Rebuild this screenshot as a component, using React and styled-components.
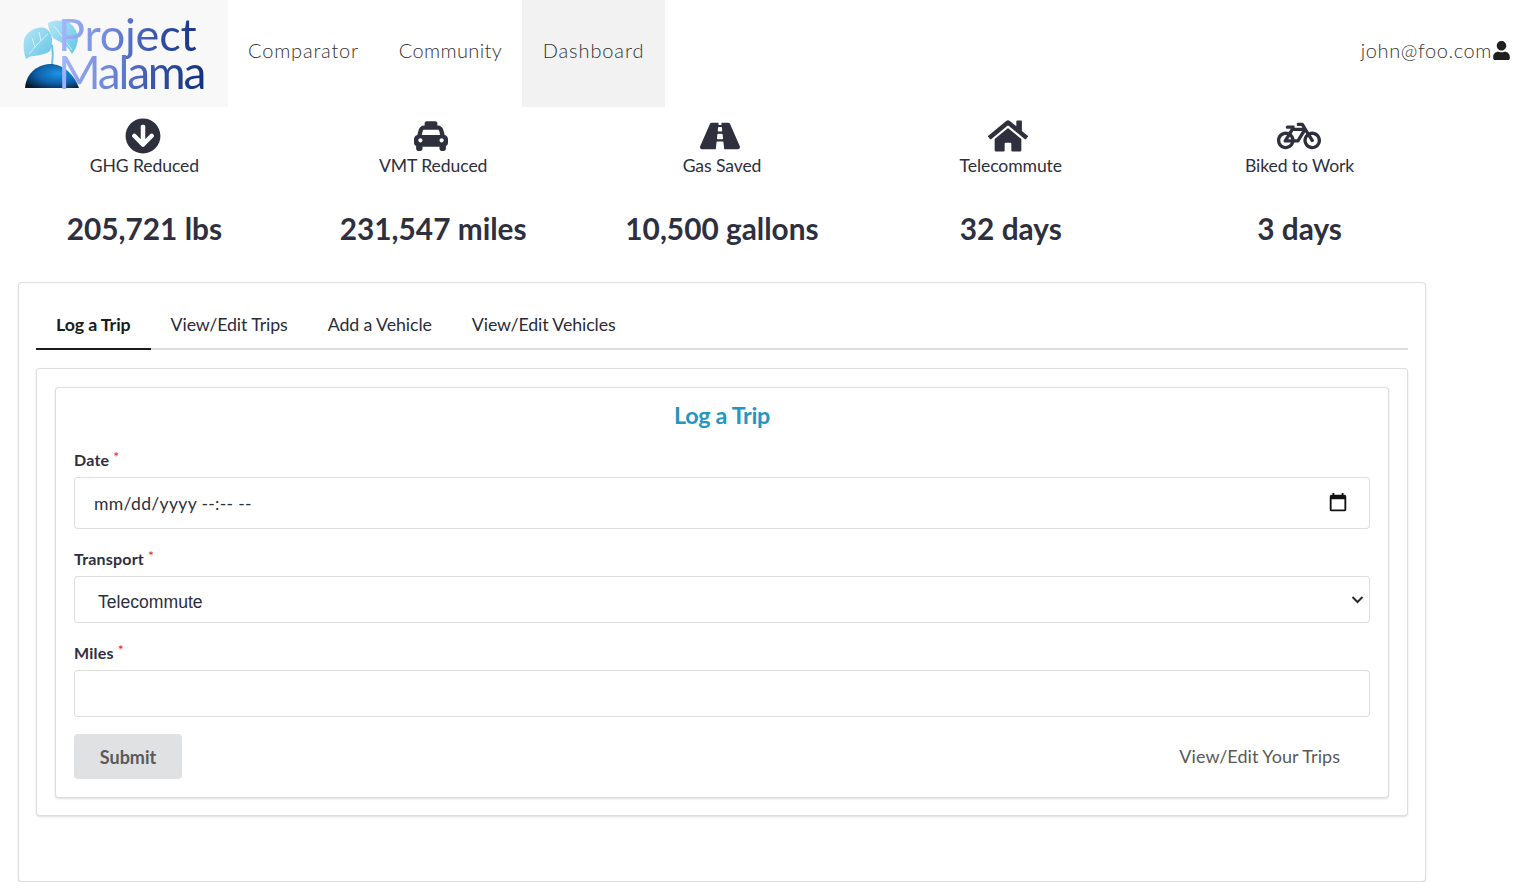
import React from 'react';
import styled, { createGlobalStyle } from 'styled-components';
import { FaArrowCircleDown, FaTaxi, FaRoad, FaHome, FaBicycle, FaUser } from 'react-icons/fa';

const GlobalStyle = createGlobalStyle`
  html, body {
    margin: 0;
    padding: 0;
    background: #fff;
    font-family: Lato, "Helvetica Neue", Arial, sans-serif;
    color: #212121;
  }
  * { box-sizing: border-box; }
`;

// Top nav

const TopNav = styled.nav`
  display: flex;
  align-items: stretch;
  height: 107px;
  background: #fff;
`;

const LogoCell = styled.div`
  position: relative;
  width: 228px;
  background: #f8f8f8;
  padding: 16px 0 0 58px;
`;

const LogoArt = styled.svg`
  position: absolute;
  left: 23px;
  top: 17px;
  width: 58px;
  height: 73px;
`;

const LogoLine = styled.div`
  position: relative;
  font-weight: 400;
  font-size: ${(p) => p.$size}px;
  line-height: 37px;
  letter-spacing: ${(p) => p.$spacing}px;
  white-space: nowrap;
  width: 150px;
  padding-bottom: 10px;
  margin-bottom: -10px;
  background: linear-gradient(100deg, #a9bcff 0%, #6d86da 35%, #2d4aa0 70%, #0d2a78 100%);
  -webkit-background-clip: text;
  background-clip: text;
  color: transparent;
`;

const NavItem = styled.a`
  display: flex;
  align-items: center;
  justify-content: center;
  width: ${(p) => p.$width}px;
  padding-bottom: 7px;
  font-weight: 300;
  font-size: 20px;
  letter-spacing: ${(p) => p.$spacing}px;
  color: #333;
  background: ${(p) => (p.$active ? '#f2f2f2' : 'transparent')};
`;

const UserBlock = styled.div`
  margin-left: auto;
  display: flex;
  align-items: center;
  padding: 0 15px 7px 0;
  font-weight: 300;
  font-size: 20px;
  letter-spacing: 0.6px;
  color: #333;

  svg {
    width: 19px;
    height: 19px;
    color: #1f1f1f;
  }
`;

// Stats row

const StatsRow = styled.section`
  display: grid;
  grid-template-columns: repeat(5, 288.8px);
  padding-top: 11px;
`;

const Stat = styled.div`
  display: flex;
  flex-direction: column;
  align-items: center;
  height: 164px;
  color: #2e2f3f;
`;

const StatIcon = styled.div`
  display: flex;
  align-items: center;
  justify-content: center;
  height: 36px;
  margin-left: ${(p) => p.$shift || 0}px;
  font-size: ${(p) => p.$size || 34}px;
  color: #2e303e;
`;

const StatLabel = styled.div`
  font-size: 17.6px;
  line-height: 24px;
  letter-spacing: -0.1px;
`;

const StatValue = styled.div`
  font-size: 29.8px;
  line-height: 36px;
  font-weight: 700;
  margin-top: 33px;
`;

// Cards

const OuterCard = styled.div`
  width: 1408px;
  height: 600px;
  margin-left: 18px;
  padding: 17px;
  background: #fff;
  border: 1px solid rgba(34, 36, 38, 0.15);
  border-radius: 4px;
  box-shadow: 0 1px 2px rgba(34, 36, 38, 0.15);
`;

const TabBar = styled.div`
  display: flex;
  height: 50px;
  border-bottom: 2px solid rgba(34, 36, 38, 0.15);
`;

const Tab = styled.a`
  height: 50px;
  padding: 0 20px;
  display: flex;
  align-items: center;
  font-size: 17.8px;
  letter-spacing: -0.1px;
  font-weight: ${(p) => (p.$active ? 700 : 400)};
  color: ${(p) => (p.$active ? '#1b1c1d' : '#2b2d3a')};
  border-bottom: 2px solid ${(p) => (p.$active ? '#1b1c1d' : 'transparent')};
`;

const TabPanel = styled.div`
  margin-top: 18px;
  padding: 18px 18px 17px;
  background: #fff;
  border: 1px solid rgba(34, 36, 38, 0.15);
  border-radius: 4px;
  box-shadow: 0 1px 2px rgba(34, 36, 38, 0.15);
`;

const FormCard = styled.form`
  height: 411px;
  padding: 12px 18px 18px;
  background: #fff;
  border: 1px solid rgba(34, 36, 38, 0.15);
  border-radius: 4px;
  box-shadow: 0 1px 2px rgba(34, 36, 38, 0.15);
`;

const FormTitle = styled.h2`
  margin: 0;
  font-size: 23.3px;
  line-height: 30px;
  font-weight: 700;
  letter-spacing: -0.3px;
  text-align: center;
  color: #2596be;
`;

const Field = styled.div`
  margin-top: 20px;
`;

const Label = styled.label`
  display: block;
  font-size: 16px;
  font-weight: 700;
  line-height: 20px;
  letter-spacing: 0.2px;
  margin-bottom: 6px;
  color: #2e2f3f;

  &::after {
    content: '*';
    margin-left: 4px;
    position: relative;
    top: -4px;
    font-size: 14px;
    font-weight: 400;
    color: #db2828;
  }
`;

const fieldBox = `
  width: 100%;
  background: #fff;
  border: 1px solid rgba(34, 36, 38, 0.15);
  border-radius: 4px;
`;

const DateBox = styled.div`
  ${fieldBox}
  display: flex;
  align-items: center;
  height: 52px;
  padding: 0 20px 0 19px;
`;

const DateText = styled.input`
  flex: 1;
  border: 0;
  outline: none;
  padding: 0;
  font-family: Lato, sans-serif;
  font-size: 17.6px;
  letter-spacing: 0.3px;
  color: #2e2f3f;

  &::placeholder {
    color: #2e2f3f;
    opacity: 1;
  }
`;

const CalendarIcon = styled.svg`
  width: 22px;
  height: 22px;
  flex: none;
  margin-top: -1px;
`;

const SelectWrap = styled.div`
  position: relative;
`;

const SelectInput = styled.select`
  ${fieldBox}
  display: block;
  height: 47px;
  padding: 4px 19px 0 23px;
  appearance: none;
  outline: none;
  font-family: "Liberation Sans", Arial, sans-serif;
  font-size: 17.6px;
  color: #2e2f3f;
`;

const Chevron = styled.svg`
  position: absolute;
  right: 6px;
  top: 17px;
  width: 13px;
  height: 13px;
  pointer-events: none;
`;

const TextInput = styled.input`
  ${fieldBox}
  display: block;
  height: 47px;
  padding: 0 19px;
  outline: none;
  font-family: Lato, sans-serif;
  font-size: 17.6px;
`;

const ActionRow = styled.div`
  display: flex;
  align-items: center;
  justify-content: space-between;
  margin-top: 17px;
  padding-right: 30px;
`;

const SubmitButton = styled.button`
  width: 108px;
  height: 45px;
  border: 0;
  border-radius: 4px;
  background: #e0e1e2;
  font-family: Lato, sans-serif;
  font-size: 18px;
  font-weight: 700;
  color: #5a5a5a;
`;

const TripsLink = styled.a`
  padding-bottom: 2px;
  font-size: 18px;
  letter-spacing: 0.05px;
  color: #5a5a5a;
`;

const stats = [
  { icon: <FaArrowCircleDown />, label: 'GHG Reduced', value: '205,721 lbs', shift: -3, size: 36 },
  { icon: <FaTaxi />, label: 'VMT Reduced', value: '231,547 miles', shift: -5 },
  { icon: <FaRoad />, label: 'Gas Saved', value: '10,500 gallons', shift: -4, size: 40 },
  { icon: <FaHome />, label: 'Telecommute', value: '32 days', shift: -5, size: 40 },
  { icon: <FaBicycle />, label: 'Biked to Work', value: '3 days', shift: -2, size: 44 },
];

const App = () => (
  <>
    <GlobalStyle />
    <TopNav>
      <LogoCell>
        <LogoArt viewBox="0 0 58 73">
          <defs>
            <linearGradient id="leaf" x1="0" y1="0" x2="1" y2="1">
              <stop offset="0" stopColor="#b6e6f6" />
              <stop offset="1" stopColor="#62c4e6" />
            </linearGradient>
            <radialGradient id="dome" cx="0.62" cy="0.4" r="0.75">
              <stop offset="0" stopColor="#1e94e6" />
              <stop offset="0.55" stopColor="#0e5fa8" />
              <stop offset="1" stopColor="#031a30" />
            </radialGradient>
          </defs>
          <path d="M27 34C30 26 31 16 22 11 13 9 3 15 1 23c-1 7 0 14 2 19 3-2 5-3 8-3 7-1 12-2 16-5z" fill="url(#leaf)" />
          <path d="M6 37C11 31 17 24 25 17M12 30 9 21M18 24 16 15" stroke="#e8f8fd" strokeWidth="0.8" fill="none" />
          <path d="M30 21c-3-5-5-11-5-15 4-2 8-3 11-2 2-1 6-1 9 1 6 3 9 10 10 15 0 6-2 12-6 17-3-6-7-9-10-11-3-2-6-3-9-5z" fill="url(#leaf)" />
          <path d="M31 9c4 5 10 13 18 24" stroke="#e8f8fd" strokeWidth="0.8" fill="none" />
          <path d="M29 28c1 6 1 13 0 19" stroke="#6fc2e0" strokeWidth="2" fill="none" />
          <path d="M2 71C3 58 12 48 27 47c13 0 24 10 29 24z" fill="url(#dome)" />
        </LogoArt>
        <LogoLine $size={45} $spacing={-0.2}>Project</LogoLine>
        <LogoLine $size={46} $spacing={-2.2}>Malama</LogoLine>
      </LogoCell>
      <NavItem $width={151} $spacing={0.8}>Comparator</NavItem>
      <NavItem $width={143} $spacing={0.4}>Community</NavItem>
      <NavItem $width={143} $spacing={0.9} $active>Dashboard</NavItem>
      <UserBlock>john@foo.com<FaUser /></UserBlock>
    </TopNav>

    <StatsRow>
      {stats.map((s) => (
        <Stat key={s.label}>
          <StatIcon $shift={s.shift} $size={s.size}>{s.icon}</StatIcon>
          <StatLabel>{s.label}</StatLabel>
          <StatValue>{s.value}</StatValue>
        </Stat>
      ))}
    </StatsRow>

    <OuterCard>
      <TabBar>
        <Tab $active>Log a Trip</Tab>
        <Tab>View/Edit Trips</Tab>
        <Tab>Add a Vehicle</Tab>
        <Tab>View/Edit Vehicles</Tab>
      </TabBar>
      <TabPanel>
        <FormCard onSubmit={(e) => e.preventDefault()}>
          <FormTitle>Log a Trip</FormTitle>
          <Field>
            <Label>Date</Label>
            <DateBox>
              <DateText type="text" placeholder="mm/dd/yyyy --:-- --" />
              <CalendarIcon viewBox="0 0 24 24">
                <path d="M19 3h-1V1h-2v2H8V1H6v2H5a2 2 0 0 0-2 2v14a2 2 0 0 0 2 2h14a2 2 0 0 0 2-2V5a2 2 0 0 0-2-2zm0 16H5V8h14v11z" fill="#111" />
              </CalendarIcon>
            </DateBox>
          </Field>
          <Field>
            <Label>Transport</Label>
            <SelectWrap>
              <SelectInput defaultValue="Telecommute">
                <option>Telecommute</option>
                <option>Bike</option>
                <option>Carpool</option>
              </SelectInput>
              <Chevron viewBox="0 0 13 13">
                <path d="M1.5 4l5 5 5-5" stroke="#2a2a2a" strokeWidth="2" fill="none" />
              </Chevron>
            </SelectWrap>
          </Field>
          <Field>
            <Label>Miles</Label>
            <TextInput type="text" />
          </Field>
          <ActionRow>
            <SubmitButton type="submit">Submit</SubmitButton>
            <TripsLink>View/Edit Your Trips</TripsLink>
          </ActionRow>
        </FormCard>
      </TabPanel>
    </OuterCard>
  </>
);

export default App;
